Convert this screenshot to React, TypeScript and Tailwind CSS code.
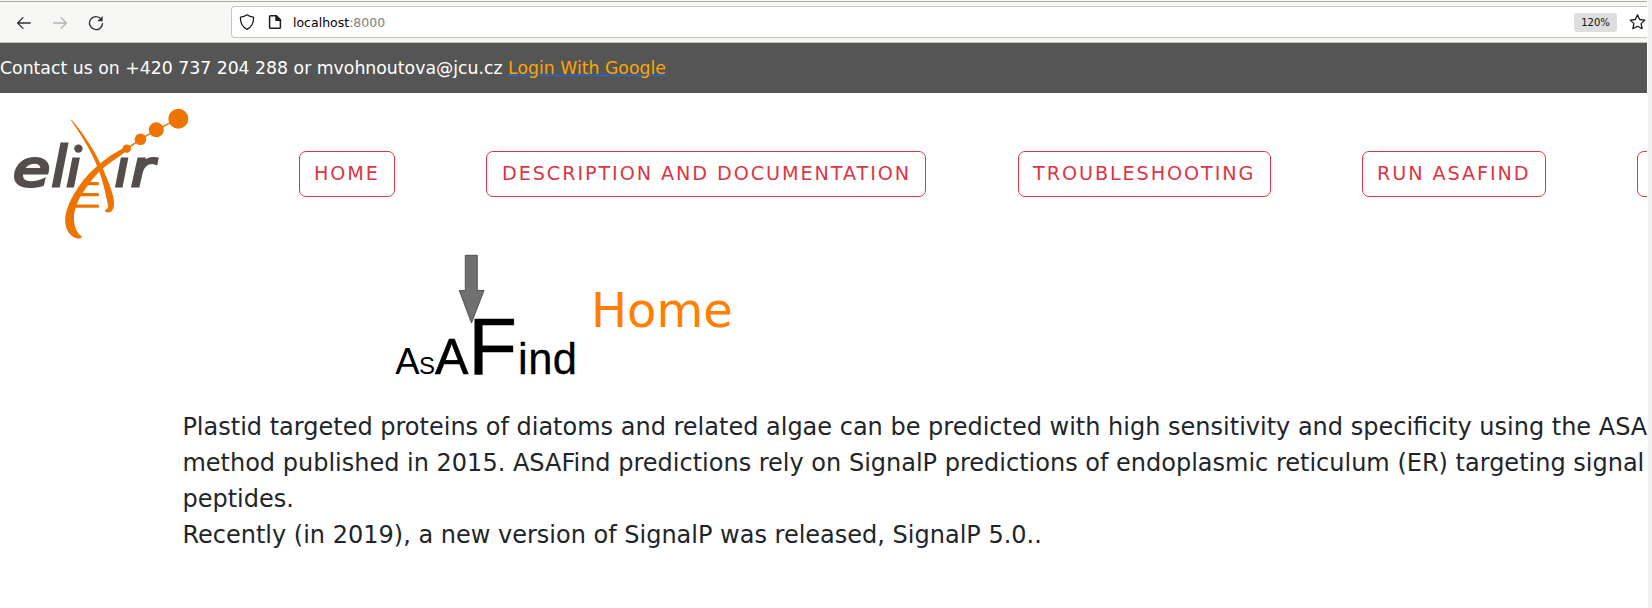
import React from "react";

function BackIcon() {
  return (
    <svg width="16" height="16" viewBox="0 0 16 16" fill="none" stroke="#2e3436" strokeWidth="1.3" strokeLinecap="round" strokeLinejoin="round">
      <path d="M14.3 8H1.7M7 2.6L1.6 8L7 13.4" />
    </svg>
  );
}

function ForwardIcon() {
  return (
    <svg width="16" height="16" viewBox="0 0 16 16" fill="none" stroke="#b0b2b1" strokeWidth="1.3" strokeLinecap="round" strokeLinejoin="round">
      <path d="M1.7 8H14.3M9 2.6L14.4 8L9 13.4" />
    </svg>
  );
}

function ReloadIcon() {
  return (
    <svg width="16" height="16" viewBox="0 0 16 16" fill="none">
      <path d="M13 3.9A6.5 6.5 0 1 0 14.5 8.6" stroke="#2e3436" strokeWidth="1.4" strokeLinecap="round" />
      <path d="M14.6 1V6.2H9.3Z" fill="#2e3436" />
    </svg>
  );
}

function ShieldIcon() {
  return (
    <svg width="16" height="16" viewBox="0 0 16 16" fill="none" stroke="#1c1c1c" strokeWidth="1.3" strokeLinejoin="round">
      <path d="M8 .8C6 2.3 3.8 3 1.5 3.2C1.2 8.6 3.3 13 8 15.3C12.7 13 14.8 8.6 14.5 3.2C12.2 3 10 2.3 8 .8Z" />
    </svg>
  );
}

function PageIcon() {
  return (
    <svg width="16" height="16" viewBox="0 0 16 16" fill="none" stroke="#1c1c1c" strokeWidth="1.5" strokeLinejoin="round">
      <path d="M3.6 1.7H9.3L13.4 5.8V13.2Q13.4 14.3 12.3 14.3H3.7Q2.6 14.3 2.6 13.2V2.7Q2.6 1.7 3.6 1.7Z" />
      <path d="M9 1.7V6.2H13.4Z" fill="#1c1c1c" />
    </svg>
  );
}

function StarIcon() {
  return (
    <svg width="17" height="16" viewBox="0 0 17 16" fill="none" stroke="#1c1c1c" strokeWidth="1.3" strokeLinejoin="round">
      <path d="M8.5 .9L10.7 5.5L15.8 6.1L12.1 9.6L13.1 14.7L8.5 12.2L3.9 14.7L4.9 9.6L1.2 6.1L6.3 5.5Z" />
    </svg>
  );
}

function Toolbar() {
  return (
    <div className="flex h-[43px] flex-col border-b border-[#c3c1b7] bg-[#f7f7f5]">
      <div className="h-0.5 shrink-0 border-b border-[#a9aaa5]" />
      <div className="flex h-10 items-center">
        <div className="ml-4 flex w-[215px] items-center gap-5 pt-px">
          <BackIcon />
          <ForwardIcon />
          <ReloadIcon />
        </div>
        <div className="flex h-8 flex-1 items-center rounded-l border border-r-0 border-[#cbc4bc] bg-white pl-[7px] text-[12.5px]">
          <ShieldIcon />
          <span className="ml-3">
            <PageIcon />
          </span>
          <span className="ml-[10px] pt-0.5 text-black">
            localhost<span className="text-[#808080]">:8000</span>
          </span>
          <span className="ml-auto flex h-[19px] w-[43px] items-center justify-center rounded-[3px] bg-[#dedede] text-[10px] text-[#111]">
            120%
          </span>
          <span className="ml-3 mr-px shrink-0">
            <StarIcon />
          </span>
        </div>
      </div>
    </div>
  );
}

function ElixirLogo() {
  return (
    <svg width="220" height="150" viewBox="0 93 220 150" className="shrink-0">
      <g fill="#554d4b" stroke="#554d4b" strokeWidth="3" fontFamily="DejaVu Sans" fontStyle="italic">
        <text x="13" y="186" fontSize="50" textLength="37" lengthAdjust="spacingAndGlyphs">e</text>
        <text x="51.5" y="186" fontSize="56">l</text>
        <text x="66.5" y="186" fontSize="50">ı</text>
        <text x="115" y="186" fontSize="50">ı</text>
        <text x="131" y="186" fontSize="50" textLength="23" lengthAdjust="spacingAndGlyphs">r</text>
      </g>
      <circle cx="78.4" cy="148.6" r="4.2" fill="#554d4b" />
      <g fill="#ee7402">
        <path d="M70.3 119.5C72 118 94 147 103 169C110 185 116 200 113.5 208C112 213 107 213.5 105 211.5C104 209 109 210 108 205C105 190 102 178 97 166C90 148 79 132 70.3 119.5Z" />
        <path d="M127 146L129 149.5C113 161 101 168 92 180C81 194 73 206 74 221C75 230 78 234 82 236.5C81 240 74 239 70 234C61 223 66 208 74 194C86 173 104 158 127 146Z" />
        <circle cx="126.8" cy="148.6" r="4.2" />
        <circle cx="140.5" cy="139.3" r="5.8" />
        <circle cx="156.3" cy="129.8" r="7.5" />
        <circle cx="178.3" cy="118.8" r="10" />
      </g>
      <g stroke="#ee7402" strokeLinecap="round">
        <path d="M127 148.6L140.5 139.3L156.3 129.8L178.3 118.8" strokeWidth="1.5" fill="none" />
        <path d="M88 183.7H97.5M81 194.7H97.5M76 206.2H97.5" strokeWidth="3.2" />
      </g>
    </svg>
  );
}

function AsafindLogo() {
  return (
    <svg width="188" height="136" viewBox="392 250 188 136" className="shrink-0 overflow-visible">
      <g fill="#000" fontFamily="Liberation Sans">
        <text x="395.3" y="374" fontSize="36.5">A</text>
        <text x="419" y="374" fontSize="24">S</text>
        <text x="435" y="374" fontSize="50" stroke="#000" strokeWidth=".6">A</text>
        <text x="468.3" y="374" fontSize="80" stroke="#000" strokeWidth=".4">F</text>
        <text x="518" y="374" fontSize="43.5" stroke="#000" strokeWidth=".3" textLength="59" lengthAdjust="spacing">ind</text>
      </g>
      <path d="M465.3 255.3H477.3V290.5H484L471.5 323L459.3 290.5H465.3Z" fill="#707070" stroke="#3c3c3c" strokeWidth=".8" />
    </svg>
  );
}

function NavButton({ label, className }: { label: string; className: string }) {
  return (
    <a className={`flex h-[46px] shrink-0 items-center whitespace-nowrap rounded-[7px] border border-[#dc3545] ${className}`}>
      {label}
    </a>
  );
}

export default function App() {
  return (
    <div className="flex h-[608px] w-[1652px] overflow-hidden bg-[#f0f0f0] font-['DejaVu_Sans',sans-serif]">
      <div className="box-content w-[1647px] overflow-hidden border-r border-white bg-white">
        <Toolbar />
        <div className="flex h-[50px] items-center whitespace-pre bg-[#555555] pt-0.5 text-[17.3px] text-white">
          Contact us on +420 737 204 288 or mvohnoutova@jcu.cz{" "}
          <a className="text-[#ffa500] underline decoration-[#0d6efd] decoration-1">Login With Google</a>
        </div>
        <header className="flex h-[157px]">
          <ElixirLogo />
          <nav className="ml-[79px] flex shrink-0 gap-[91px] pt-[58px] text-[19.2px] tracking-[1.92px] text-[#dc3545]">
            <NavButton label="HOME" className="w-24 pl-[14px]" />
            <NavButton label="DESCRIPTION AND DOCUMENTATION" className="mr-px w-[440px] pl-[15px]" />
            <NavButton label="TROUBLESHOOTING" className="w-[253px] pl-[14px]" />
            <NavButton label="RUN ASAFIND" className="w-[184px] pl-[14px]" />
            <NavButton label="" className="w-40" />
          </nav>
        </header>
        <section className="flex h-[136px] pl-[392px]">
          <AsafindLogo />
          <h1 className="ml-[11px] mt-[32px] text-[48px] leading-[56px] text-[#ff8000]">Home</h1>
        </section>
        <main className="ml-[182.4px] mt-[23px] w-[1540px] whitespace-nowrap text-2xl leading-9 text-[#212529]">
          <p>
            Plastid targeted proteins of diatoms and related algae can be predicted with high sensitivity and specificity using the ASA
            <br />
            method published in 2015. ASAFind predictions rely on SignalP predictions of endoplasmic reticulum (ER) targeting signal
            <br />
            peptides.
            <br />
            Recently (in 2019), a new version of SignalP was released, SignalP 5.0..
          </p>
        </main>
      </div>
    </div>
  );
}
